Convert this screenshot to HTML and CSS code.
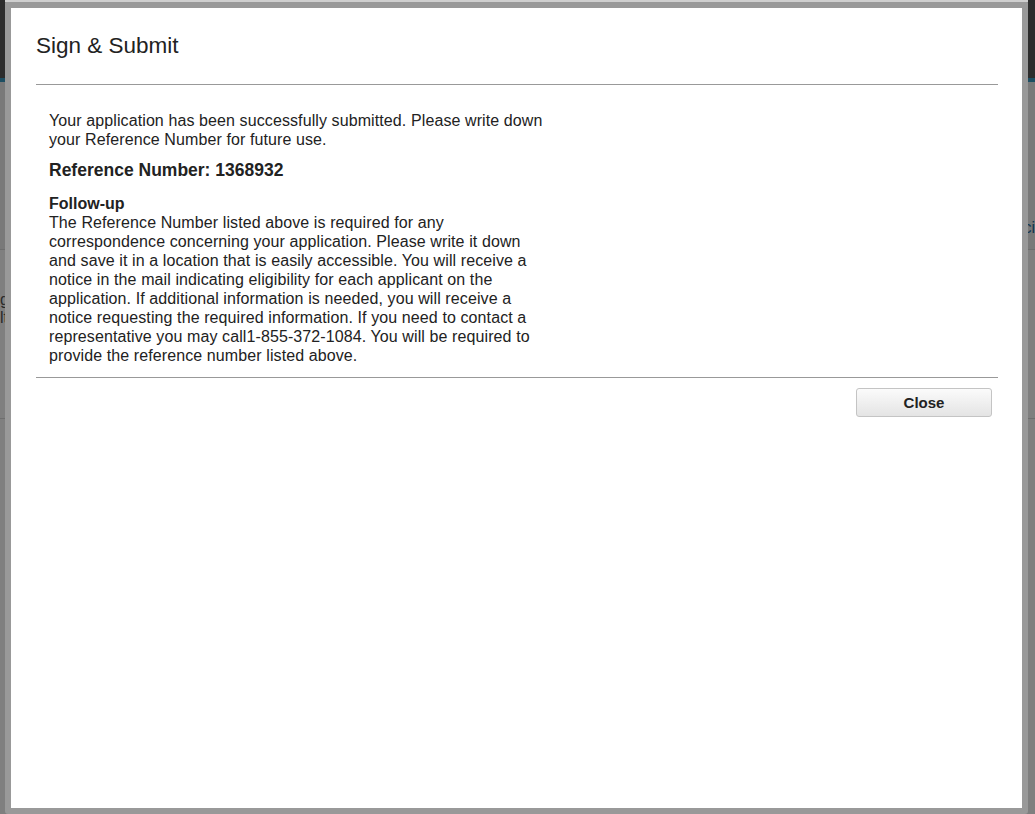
FILE: index.html
```html
<!DOCTYPE html>
<html lang="en">
<head>
<meta charset="utf-8">
<title>Sign &amp; Submit</title>
<link rel="stylesheet" href="styles.css">
</head>
<body>
  <div class="page">
    <header class="topbar"></header>
    <div class="page-body">
      <div class="page-row page-row-tabs">
        <span class="page-link">ci</span>
      </div>
      <div class="page-row page-row-fields">
        <span class="page-label">g</span>
        <span class="page-label">lt</span>
      </div>
    </div>
  </div>
  <div class="overlay"></div>
  <div class="modal" role="dialog" aria-labelledby="dlg-title">
    <div class="modal-header">
      <h1 id="dlg-title" class="modal-title">Sign &amp; Submit</h1>
    </div>
    <div class="modal-body">
      <p class="intro">Your application has been successfully submitted. Please write down your Reference Number for future use.</p>
      <h2 class="ref-number">Reference Number: 1368932</h2>
      <h3 class="followup-title">Follow-up</h3>
      <p class="followup-text">The Reference Number listed above is required for any correspondence concerning your application. Please write it down and save it in a location that is easily accessible. You will receive a notice in the mail indicating eligibility for each applicant on the application. If additional information is needed, you will receive a notice requesting the required information. If you need to contact a representative you may call1-855-372-1084. You will be required to provide the reference number listed above.</p>
    </div>
    <div class="modal-footer">
      <button class="btn-close" type="button">Close</button>
    </div>
  </div>
</body>
</html>
```
FILE: styles.css
```css
* { box-sizing: border-box; }

html, body {
  margin: 0;
  padding: 0;
  height: 100%;
}

body {
  font-family: "Liberation Sans", Arial, sans-serif;
  color: #222;
  background: #fff;
  overflow: hidden;
}

/* ---------- page behind the dialog ---------- */
.page {
  min-height: 100%;
}

.topbar {
  height: 82px;
  background: #585858;
  border-bottom: 4px solid #3a9cc4;
}

.page-body {
  background: #fafafa;
}

.page-row {
  display: flex;
  border-bottom: 1px solid #dcdcdc;
  font-size: 16px;
  line-height: 18px;
}

.page-row-tabs {
  height: 168px;
  padding-top: 137px;
  justify-content: flex-end;
  align-items: flex-start;
  background: #f2f2f2;
}

.page-link {
  color: #1e6aa0;
}

.page-row-fields {
  height: 169px;
  flex-direction: column;
  align-items: flex-start;
  padding-top: 41px;
  background: #fff;
  color: #555;
}

.overlay {
  position: fixed;
  inset: 0;
  background: rgba(0, 0, 0, 0.5);
}

/* ---------- dialog ---------- */
.modal {
  position: absolute;
  top: 0;
  left: 5px;
  width: 1023px;
  height: 814px;
  background: #fff;
  border: 6px solid #999;
  border-top-width: 8px;
  border-radius: 3px;
  display: flex;
  flex-direction: column;
}

.modal::before {
  content: "";
  position: absolute;
  top: -8px;
  left: -6px;
  right: -6px;
  height: 2px;
  background: #cfcfcf;
}

.modal-header {
  margin: 0 24px 0 25px;
  padding: 26px 0 26px;
  border-bottom: 1px solid #999;
}

.modal-title {
  margin: 0;
  font-size: 22.5px;
  line-height: 24px;
  font-weight: normal;
  color: #222;
}

.modal-body {
  margin: 0 24px 0 25px;
  padding: 26px 0 12px 13px;
  border-bottom: 1px solid #999;
}

.intro,
.followup-text {
  width: 498px;
  margin: 0;
  font-size: 16px;
  line-height: 19px;
  letter-spacing: 0.1px;
}

.ref-number {
  margin: 11px 0 0;
  font-size: 17.5px;
  line-height: 20px;
  font-weight: bold;
}

.followup-title {
  margin: 14px 0 0;
  font-size: 16px;
  line-height: 19px;
  font-weight: bold;
}

.modal-footer {
  margin: 0 30px 0 25px;
  padding-top: 10px;
  display: flex;
  justify-content: flex-end;
}

.btn-close {
  width: 136px;
  height: 29px;
  font-family: "Liberation Sans", Arial, sans-serif;
  font-size: 15px;
  font-weight: bold;
  color: #222;
  background: linear-gradient(#fbfbfb, #e4e4e4);
  border: 1px solid #c4c4c4;
  border-radius: 3px;
  padding: 0;
}
```
